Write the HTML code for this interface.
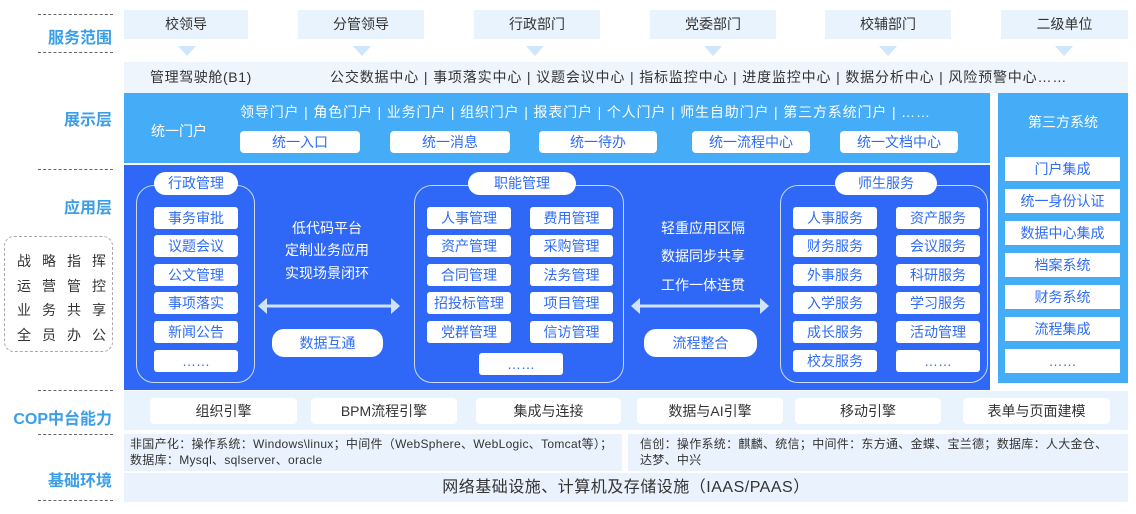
<!DOCTYPE html>
<html><head><meta charset="utf-8"><style>
*{margin:0;padding:0;box-sizing:border-box}
body{width:1136px;height:514px;background:#fff;position:relative;overflow:hidden;font-family:"Liberation Sans","Noto Sans CJK SC",sans-serif;color:#333}
.a{position:absolute}
.lbl{position:absolute;right:1024px;font-size:16px;font-weight:bold;color:#3b9ee9;white-space:nowrap;text-align:right}
.dash{position:absolute;left:38px;width:75px;border-top:1px dashed #666}
.top{position:absolute;top:10px;height:29px;background:#e8f3fe;font-size:14px;color:#333;text-align:center;line-height:29px}
.tri{position:absolute;top:46px;width:0;height:0;border-left:9px solid transparent;border-right:9px solid transparent;border-top:10px solid #cfe6fc}
.wb{position:absolute;background:#fff;border-radius:3px;text-align:center;font-size:14px;color:#2e6bf6;height:22px;line-height:22px}
.grp{position:absolute;top:185px;height:198px;border:1px solid #c9d8fb;border-radius:18px}
.pill{position:absolute;top:172px;height:23px;background:#fff;border-radius:12px;text-align:center;font-size:14px;color:#2e6bf6;line-height:23px}
.ct{position:absolute;color:#fff;font-size:14px;text-align:center;width:160px}
.rb{position:absolute;left:1005px;width:115px;height:24px;background:#fff;text-align:center;font-size:14px;color:#2e6bf6;line-height:24px}
.cop{position:absolute;top:398px;height:26px;background:#fff;border-radius:4px;text-align:center;font-size:14px;color:#333;line-height:26px}
.btn{position:absolute;top:131px;height:22px;background:#fff;border-radius:4px;text-align:center;font-size:14px;color:#2e6bf6;line-height:22px}
.lb span{display:inline-block;width:25px}
</style></head><body>
<div class="dash" style="top:14px"></div>
<div class="lbl" style="top:24px">服务范围</div>
<div class="dash" style="top:52px"></div>
<div class="lbl" style="top:106px">展示层</div>
<div class="dash" style="top:169px"></div>
<div class="lbl" style="top:194px">应用层</div>
<div class="a lb" style="left:4px;top:236px;width:109px;height:116px;border:1px dashed #aaa;border-radius:10px;font-size:14px;color:#333;line-height:24.5px;padding:12px 0 0 12px;white-space:nowrap">
<div><span>战</span><span>略</span><span>指</span><span>挥</span></div>
<div><span>运</span><span>营</span><span>管</span><span>控</span></div>
<div><span>业</span><span>务</span><span>共</span><span>享</span></div>
<div><span>全</span><span>员</span><span>办</span><span>公</span></div>
</div>
<div class="dash" style="top:390px"></div>
<div class="lbl" style="top:405px">COP中台能力</div>
<div class="dash" style="top:434px"></div>
<div class="lbl" style="top:467px">基础环境</div>
<div class="dash" style="top:500px"></div>

<div class="top" style="left:124px;width:124px">校领导</div>
<div class="top" style="left:298px;width:126px">分管领导</div>
<div class="top" style="left:474px;width:126px">行政部门</div>
<div class="top" style="left:650px;width:126px">党委部门</div>
<div class="top" style="left:825px;width:126px">校辅部门</div>
<div class="top" style="left:1001px;width:127px">二级单位</div>
<div class="tri" style="left:178px"></div>
<div class="tri" style="left:353px"></div>
<div class="tri" style="left:526px"></div>
<div class="tri" style="left:704px"></div>
<div class="tri" style="left:879px"></div>
<div class="tri" style="left:1055px"></div>

<div class="a" style="left:124px;top:62px;width:1004px;height:31px;background:#eef5fd;font-size:14px;line-height:31px;color:#333"><span style="position:absolute;left:26px;letter-spacing:0.6px">管理驾驶舱(B1)</span><span style="position:absolute;left:206px;white-space:nowrap;letter-spacing:0.85px">公交数据中心 | 事项落实中心 | 议题会议中心 | 指标监控中心 | 进度监控中心 | 数据分析中心 | 风险预警中心……</span></div>

<div class="a" style="left:124px;top:93px;width:866px;height:70px;background:#45acf7"></div>
<div class="a" style="left:151px;top:121px;color:#fff;font-size:14px">统一门户</div>
<div class="a" style="left:240px;top:102px;color:#fff;font-size:14px;white-space:nowrap;letter-spacing:0.85px">领导门户 | 角色门户 | 业务门户 | 组织门户 | 报表门户 | 个人门户 | 师生自助门户 | 第三方系统门户 | ……</div>
<div class="btn" style="left:240px;width:120px">统一入口</div>
<div class="btn" style="left:390px;width:120px">统一消息</div>
<div class="btn" style="left:539px;width:118px">统一待办</div>
<div class="btn" style="left:692px;width:118px">统一流程中心</div>
<div class="btn" style="left:840px;width:118px">统一文档中心</div>

<div class="a" style="left:998px;top:93px;width:130px;height:290px;background:#45acf7"></div>
<div class="a" style="left:998px;top:112px;width:130px;text-align:center;color:#fff;font-size:14px">第三方系统</div>
<div class="rb" style="top:157px">门户集成</div>
<div class="rb" style="top:189px">统一身份认证</div>
<div class="rb" style="top:221px">数据中心集成</div>
<div class="rb" style="top:253px">档案系统</div>
<div class="rb" style="top:285px">财务系统</div>
<div class="rb" style="top:317px">流程集成</div>
<div class="rb" style="top:349px">……</div>

<div class="a" style="left:124px;top:165px;width:866px;height:225px;background:#2f68f6"></div>
<div class="grp" style="left:136px;width:119px"></div>
<div class="pill" style="left:154px;width:84px">行政管理</div>
<div class="wb" style="left:154px;top:207px;width:84px">事务审批</div>
<div class="wb" style="left:154px;top:235px;width:84px">议题会议</div>
<div class="wb" style="left:154px;top:264px;width:84px">公文管理</div>
<div class="wb" style="left:154px;top:292px;width:84px">事项落实</div>
<div class="wb" style="left:154px;top:321px;width:84px">新闻公告</div>
<div class="wb" style="left:154px;top:350px;width:84px">……</div>

<div class="ct" style="left:247px;top:218px">低代码平台</div>
<div class="ct" style="left:247px;top:240px">定制业务应用</div>
<div class="ct" style="left:247px;top:263px">实现场景闭环</div>
<svg class="a" style="left:258px;top:296px" width="142" height="20"><path d="M8 10H134" stroke="#cfe3fd" stroke-width="3"/><path d="M0 10L9 2V18Z M142 10L133 2V18Z" fill="#cfe3fd"/></svg>
<div class="wb" style="left:272px;top:329px;width:111px;height:28px;line-height:28px;border-radius:12px">数据互通</div>

<div class="grp" style="left:414px;width:210px"></div>
<div class="pill" style="left:468px;width:108px">职能管理</div>
<div class="wb" style="left:427px;top:207px;width:84px">人事管理</div>
<div class="wb" style="left:530px;top:207px;width:83px">费用管理</div>
<div class="wb" style="left:427px;top:235px;width:84px">资产管理</div>
<div class="wb" style="left:530px;top:235px;width:83px">采购管理</div>
<div class="wb" style="left:427px;top:264px;width:84px">合同管理</div>
<div class="wb" style="left:530px;top:264px;width:83px">法务管理</div>
<div class="wb" style="left:427px;top:292px;width:84px">招投标管理</div>
<div class="wb" style="left:530px;top:292px;width:83px">项目管理</div>
<div class="wb" style="left:427px;top:321px;width:84px">党群管理</div>
<div class="wb" style="left:530px;top:321px;width:83px">信访管理</div>
<div class="wb" style="left:479px;top:353px;width:84px">……</div>

<div class="ct" style="left:623px;top:218px">轻重应用区隔</div>
<div class="ct" style="left:623px;top:246px">数据同步共享</div>
<div class="ct" style="left:623px;top:275px">工作一体连贯</div>
<svg class="a" style="left:631px;top:296px" width="138" height="20"><path d="M8 10H130" stroke="#cfe3fd" stroke-width="3"/><path d="M0 10L9 2V18Z M138 10L129 2V18Z" fill="#cfe3fd"/></svg>
<div class="wb" style="left:644px;top:329px;width:113px;height:28px;line-height:28px;border-radius:12px">流程整合</div>

<div class="grp" style="left:780px;width:208px"></div>
<div class="pill" style="left:835px;width:102px">师生服务</div>
<div class="wb" style="left:793px;top:207px;width:84px">人事服务</div>
<div class="wb" style="left:896px;top:207px;width:84px">资产服务</div>
<div class="wb" style="left:793px;top:235px;width:84px">财务服务</div>
<div class="wb" style="left:896px;top:235px;width:84px">会议服务</div>
<div class="wb" style="left:793px;top:264px;width:84px">外事服务</div>
<div class="wb" style="left:896px;top:264px;width:84px">科研服务</div>
<div class="wb" style="left:793px;top:292px;width:84px">入学服务</div>
<div class="wb" style="left:896px;top:292px;width:84px">学习服务</div>
<div class="wb" style="left:793px;top:321px;width:84px">成长服务</div>
<div class="wb" style="left:896px;top:321px;width:84px">活动管理</div>
<div class="wb" style="left:793px;top:350px;width:84px">校友服务</div>
<div class="wb" style="left:896px;top:350px;width:84px">……</div>

<div class="a" style="left:124px;top:391px;width:1004px;height:39px;background:#e8f3fe"></div>
<div class="cop" style="left:150px;width:147px">组织引擎</div>
<div class="cop" style="left:311px;width:146px">BPM流程引擎</div>
<div class="cop" style="left:476px;width:145px">集成与连接</div>
<div class="cop" style="left:637px;width:146px">数据与AI引擎</div>
<div class="cop" style="left:795px;width:146px">移动引擎</div>
<div class="cop" style="left:963px;width:147px">表单与页面建模</div>

<div class="a" style="left:124px;top:434px;width:498px;height:37px;background:#eaf3fd;font-size:12px;line-height:16px;padding:2px 0 0 6px;color:#333;white-space:nowrap;letter-spacing:0.3px">非国产化：操作系统：Windows\linux；中间件（WebSphere、WebLogic、Tomcat等）；<br>数据库：Mysql、sqlserver、oracle</div>
<div class="a" style="left:628px;top:434px;width:500px;height:37px;background:#eaf3fd;font-size:12px;line-height:16px;padding:2px 0 0 12px;color:#333;white-space:nowrap;letter-spacing:0.3px">信创：操作系统：麒麟、统信；中间件：东方通、金蝶、宝兰德；数据库：人大金仓、<br>达梦、中兴</div>
<div class="a" style="left:124px;top:473px;width:1004px;height:29px;background:#e9f2fd;font-size:16px;line-height:29px;text-align:center;color:#333;letter-spacing:0.5px">网络基础设施、计算机及存储设施（IAAS/PAAS）</div>
</body></html>
